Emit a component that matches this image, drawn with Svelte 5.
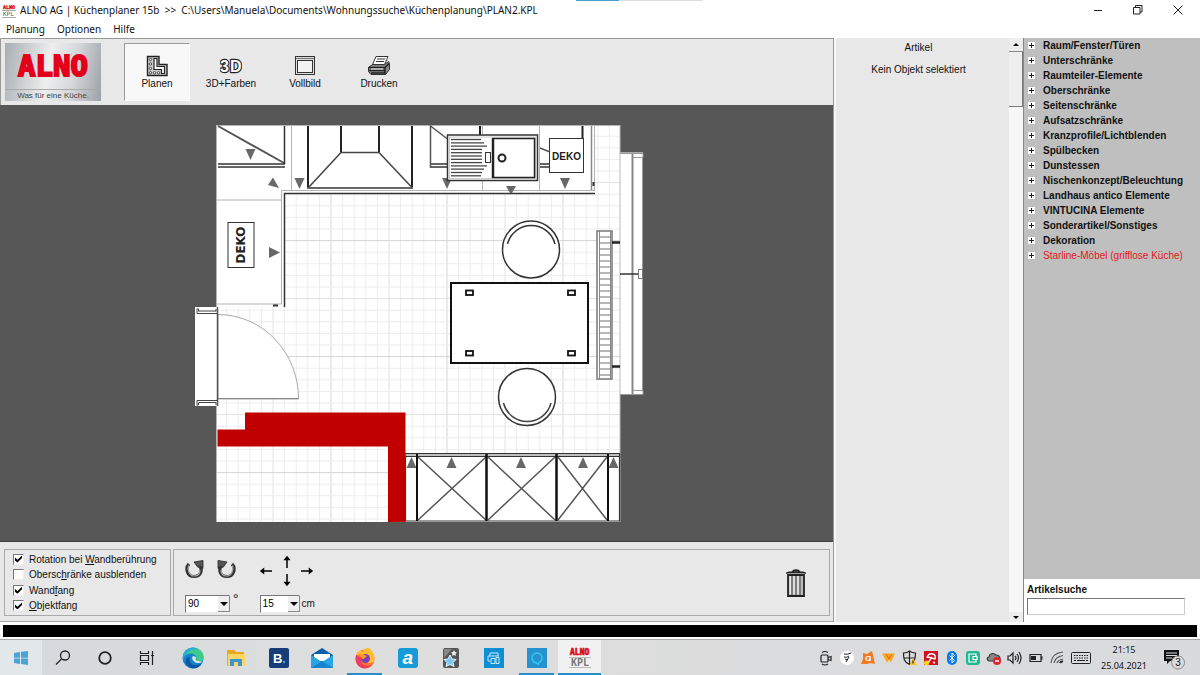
<script>
  const menu = ['Planung', 'Optionen', 'Hilfe'];

  const tools = [
    { id: 'planen', label: 'Planen' },
    { id: 'farben', label: '3D+Farben' },
    { id: 'vollbild', label: 'Vollbild' },
    { id: 'drucken', label: 'Drucken' }
  ];

  const katalog = [
    'Raum/Fenster/Türen',
    'Unterschränke',
    'Raumteiler-Elemente',
    'Oberschränke',
    'Seitenschränke',
    'Aufsatzschränke',
    'Kranzprofile/Lichtblenden',
    'Spülbecken',
    'Dunstessen',
    'Nischenkonzept/Beleuchtung',
    'Landhaus antico Elemente',
    'VINTUCINA Elemente',
    'Sonderartikel/Sonstiges',
    'Dekoration',
    'Starline-Möbel (grifflose Küche)'
  ];

  const apps = ['edge', 'explorer', 'booking', 'mail', 'firefox', 'a', 'photo', 'print', 'alexa', 'alno'];
  const tray = ['meet', 'pen', 'avast', 'w', 'shield', 'avira', 'bluetooth', 'wallet', 'cloud', 'sound', 'battery', 'wifi'];
  const running = ['firefox', 'alexa', 'alno'];

  let activeTool = $state('planen');
  let rotation = $state(true);
  let ausblenden = $state(false);
  let wandfang = $state(true);
  let objektfang = $state(true);
  let winkel = $state('90');
  let schritt = $state('15');
  let suche = $state('');

  // Raster: alle 10 cm eine Linie, jede zehnte kräftig
  const step = 11.6;
  const gridX = Array.from({ length: 35 }, (_, i) => ({ pos: 215 + i * step, i })).slice(1);
  const gridY = Array.from({ length: 35 }, (_, i) => ({ pos: 124.6 + i * step, i })).slice(1);
  const gridColor = (i) => (i % 10 === 0 ? '#d6d6d6' : i % 5 === 0 ? '#e2e2e2' : '#ededed');

  const abtropf = [481, 484, 487, 482, 482, 482, 482, 482, 487, 484, 482, 481];
  const rippen = Array.from({ length: 24 }, (_, i) => 237 + i * 6);
  const schraenke = [[418, 486], [488, 555], [558, 607]];
</script>

{#snippet down(x, y)}
  <path d="M{x - 5} {y - 5}h10l-5 11z" fill="#686868" />
{/snippet}

{#snippet up(x, y)}
  <path d="M{x - 5} {y + 5}h10l-5 -11z" fill="#686868" />
{/snippet}

{#snippet turn()}
  <path d="M4 5C0 9 2 17.500 9 17.500c7 0 8.500-6 6-10.500" fill="none" stroke="#333" stroke-width="3.200" />
  <path d="M3.500 6.500C2 11 4.500 17 9.500 17c4 0 5.500-2.500 5.500-6" fill="none" stroke="#aaa" stroke-width="1.200" />
  <path d="M9 3l9-1.500v8l-3-2.500-2 1.500z" fill="#555" stroke="#222" stroke-width=".8" />
{/snippet}

<div class="window">
  <header class="titlebar">
    <svg class="app-icon" width="14" height="15" viewBox="0 0 14 15">
      <text x="1" y="6" font-size="5" font-weight="bold" fill="#d8101c" stroke="#d8101c" stroke-width=".4">ALNO</text>
      <path d="M0 7.500h14M0 14.500h14" stroke="#aaa" />
      <text x="1" y="13" font-size="6" fill="#555">KPL</text>
    </svg>
    <h1>ALNO AG | Küchenplaner 15b  &gt;&gt;  C:\Users\Manuela\Documents\Wohnungssuche\Küchenplanung\PLAN2.KPL</h1>
    <div class="tab-edge"></div>
    <div class="controls">
      <button aria-label="Minimieren"><svg width="10" height="10" viewBox="0 0 10 10"><path d="M1 5.500h8" stroke="#222" /></svg></button>
      <button aria-label="Verkleinern"><svg width="10" height="10" viewBox="0 0 10 10"><path d="M.5 2.500h6.500v6.500h-6.500zM2.500 2.500v-2h6.500v6.500h-2" fill="none" stroke="#222" /></svg></button>
      <button aria-label="Schließen"><svg width="10" height="10" viewBox="0 0 10 10"><path d="M.5 .5l9 9M9.500 .5l-9 9" stroke="#222" /></svg></button>
    </div>
  </header>

  <nav class="menu">
    {#each menu as item}
      <button>{item}</button>
    {/each}
  </nav>

  <main>
    <section class="planner">
      <div class="toolbar">
        <div class="brand">
          <strong>ALNO</strong>
          <span>Was für eine Küche.</span>
        </div>
        {#each tools as tool}
          <button class="tool" class:active={activeTool === tool.id} onclick={() => (activeTool = tool.id)}>
            <svg width="22" height="22" viewBox="0 0 22 22" fill="none" stroke="#333">
              {#if tool.id === 'planen'}
                <path d="M1.500 1.500h11.500v8h8v11h-19.500z" fill="#ccc" stroke="#222" stroke-width="1.400" />
                <path d="M8 3.500h3v8h7.500v7h-3v-4h-7.500z" fill="#fff" stroke="#222" stroke-width="1.200" />
                {#each [[4.5, 4.5], [4.5, 9], [4.5, 13.5], [4.5, 17.8], [8.5, 17.8], [12.5, 17.8]] as [cx, cy]}
                  <circle {cx} {cy} r="1.200" fill="#fff" stroke-width=".9" />
                {/each}
              {:else if tool.id === 'farben'}
                <g font-size="16" font-weight="bold" fill="#fff" stroke="#222" stroke-width="2.400" paint-order="stroke" stroke-linejoin="round">
                  <text x="0" y="17">3</text>
                  <text x="10" y="17">D</text>
                </g>
              {:else if tool.id === 'vollbild'}
                <rect x="1.500" y="1.500" width="19" height="18" fill="#ddd" />
                <path d="M2 3.500h18" stroke="#777" />
                <rect x="3.500" y="5.500" width="15" height="12" fill="#f2f2f2" />
              {:else}
                <path d="M8 1.500h12l-3.500 8h-12z" fill="#fff" />
                <path d="M9 4h8M8 6.500h8" />
                <path d="M4.500 9.500h12l4-3 1 2v6l-4 5H3l-2.500-3v-4z" fill="#888" />
                <path d="M.5 12.500h16.500l4-4M1 15.500h16M3 18h14M17 13v6" stroke="#222" stroke-width="1.500" />
                <path d="M3 14h12" stroke="#eee" />
              {/if}
            </svg>
            <span>{tool.label}</span>
          </button>
        {/each}
      </div>

      <div class="canvas">
        <svg viewBox="0 105 833 436" role="img" aria-label="Grundriss der Küche" fill="none">
          <path d="M216 125h404v397h-404z" fill="#fff" />
          {#each gridX as line}
            <path d="M{line.pos} 125v397" stroke={gridColor(line.i)} />
          {/each}
          {#each gridY as line}
            <path d="M216 {line.pos}h404" stroke={gridColor(line.i)} />
          {/each}
          <path d="M216.500 522v-396.500h403.500" stroke="#b5b5b5" />

          <!-- Arbeitsplatte -->
          <path d="M217 126h378v68h-310v113h-68z" fill="#fff" />
          <path d="M595 190.500h-313.500v113.500h-64.500M217 200h65M291.500 126v65M482.500 126v65M539.500 126v65M594.500 126v65" stroke="#b2b2b2" />
          <path d="M595 193.500h-310.500v113.500" stroke="#333" stroke-width="1.500" />
          <path d="M591.500 126v64" stroke="#888" stroke-width="1.500" />
          <path d="M593.500 182v4M273 305.500h5" stroke="#333" stroke-width="2" />

          <!-- Oberschränke -->
          <path d="M218 126l66 37" stroke="#555" stroke-width="2" />
          <path d="M284.500 126v38M218 164h67M218 167h67M430.500 164h17M430.500 167h17M540 164h10M540 167h10" stroke="#333" stroke-width="1.500" />
          <path d="M430.500 168v-42l17 13M540 148l10 4" stroke="#555" stroke-width="1.500" />
          <path d="M480 126v10M582.500 126v13" stroke="#222" stroke-width="2" />

          <!-- Dunstabzug -->
          <path d="M308 126v61M412 126v61M341 126v26M379 126v26" stroke="#222" stroke-width="2" />
          <path d="M309 187l32-34.500h38l32.500 34.500" stroke="#444" stroke-width="1.500" />
          <path d="M307 188h106" stroke="#333" stroke-width="1.500" />

          {@render down(250.5, 154)}
          {@render down(299.5, 183)}
          {@render down(447, 183)}
          {@render down(565, 183)}
          <path d="M506 186h10l-4 7h-2z" fill="#686868" />
          <path d="M273 177.500l6 10.500-11-3z" fill="#686868" />
          <path d="M269 247v11l11-5.500z" fill="#686868" />

          <!-- Spüle -->
          <rect x="447.500" y="135" width="90" height="45.500" fill="#fff" stroke="#333" stroke-width="1.500" />
          <rect x="449.500" y="137" width="86" height="41.500" stroke="#999" stroke-width=".5" />
          {#each abtropf as end, i}
            <path d="M451 {139.5 + i * 3.3}H{end}" stroke="#444" stroke-width="1.300" />
          {/each}
          <rect x="485.500" y="152.500" width="5" height="10" fill="#fff" stroke="#333" />
          <rect x="493" y="138.500" width="41.500" height="39" fill="#fff" stroke="#222" stroke-width="1.500" />
          <path d="M493 138v40" stroke="#222" stroke-width="2.500" />
          <circle cx="502" cy="158" r="3.500" stroke="#222" stroke-width="2" />

          <!-- Deko -->
          <rect x="549.500" y="138.500" width="34" height="34" fill="#fff" stroke="#333" />
          <text x="566.500" y="160" text-anchor="middle" class="deko">DEKO</text>
          <rect x="228" y="222.500" width="26" height="45" fill="#fff" stroke="#333" />
          <text transform="translate(245 245) rotate(-90)" text-anchor="middle" class="deko wide">DEKO</text>

          <!-- Tisch und Stühle -->
          <rect x="451" y="283" width="137" height="80" fill="#fff" stroke="#111" stroke-width="2" />
          {#each [[466, 290.5], [568, 290.5], [466, 351], [568, 351]] as [x, y]}
            <rect {x} {y} width="7" height="4.500" stroke="#111" stroke-width="1.800" />
          {/each}
          <circle cx="531" cy="249.500" r="28.500" fill="#fff" stroke="#333" stroke-width="1.500" />
          <path d="M507.500 244a24.500 24.500 0 0 1 47.500 0" stroke="#333" stroke-width="1.500" />
          <circle cx="527" cy="397" r="28.500" fill="#fff" stroke="#333" stroke-width="1.500" />
          <path d="M503.500 403a24.500 24.500 0 0 0 47.500 0" stroke="#444" stroke-width="1.500" />

          <!-- Fenster -->
          <path d="M620 152.500h23v242.500h-23z" fill="#fff" />
          <path d="M620 125v397" stroke="#bbb" />
          <path d="M632.500 153v242" stroke="#888" stroke-width="2" />
          <path d="M620 153.500h23M633 157.500h10v-4M620 394.500h13M633 390.500h10v4h-10M642.500 157v234" stroke="#999" />
          <path d="M620 274h18" stroke="#333" stroke-width="1.500" />
          <rect x="638.500" y="269.500" width="4" height="9" fill="#fff" stroke="#777" />

          <!-- Heizkörper -->
          <rect x="597" y="231" width="15" height="148" fill="#fff" stroke="#777" stroke-width="1.500" />
          <path d="M599.500 231v148M610.500 231v148" stroke="#888" />
          {#each rippen as y}
            <path d="M599 {y}h12" stroke="#888" stroke-width="1.200" />
          {/each}
          <path d="M612 242.500h8M612 366.500h8" stroke="#222" stroke-width="2.500" />

          <!-- Tür -->
          <path d="M218 314.500a80.500 84 0 0 1 80.500 84.500h-80.500z" fill="#fff" stroke="#aaa" />
          <path d="M218 398.500h81" stroke="#888" />
          <path d="M195 307h23v99h-23z" fill="#fff" />
          <path d="M217.500 307v99" stroke="#555" stroke-width="1.500" />
          <path d="M197 309.500v4h21M199 311h17M197 404.500v-4h21M199 402.500h17M196.500 309h2v2.500M216 309v2.500M196.500 405h2v-2.500M216 405v-2.500" stroke="#444" />

          <!-- Schränke unten -->
          <path d="M405 453h215v68.500h-215z" fill="#fff" />
          <path d="M405.500 453.500h214v67.500h-214zM405 456.500h214" stroke="#333" stroke-width="1.200" />
          <path d="M405 455h214" stroke="#aaa" stroke-width="1.500" />
          {@render up(411.5, 463)}
          {@render up(451.5, 463)}
          {@render up(521, 463)}
          {@render up(583, 463)}
          {@render up(613.500, 463)}
          {#each schraenke as [l, r]}
            <path d="M{l} 457L{r} 520M{r} 457L{l} 520" stroke="#555" stroke-width="1.500" />
          {/each}
          <path d="M417 454v67M608 454v67" stroke="#111" stroke-width="2" />
          <path d="M486.500 454v67M556.500 454v67" stroke="#111" stroke-width="2.500" />

          <!-- Wand -->
          <path d="M245 412.500h160.500v109.500h-17.500v-75.500h-170.500v-17h27.500z" fill="#c00000" />
        </svg>
      </div>

      <div class="options">
        <fieldset class="checks">
          <label><input type="checkbox" bind:checked={rotation} /><span>Rotation bei <u>W</u>andberührung</span></label>
          <label><input type="checkbox" bind:checked={ausblenden} /><span>Obersc<u>h</u>ränke ausblenden</span></label>
          <label><input type="checkbox" bind:checked={wandfang} /><span>Wand<u>f</u>ang</span></label>
          <label><input type="checkbox" bind:checked={objektfang} /><span><u>O</u>bjektfang</span></label>
        </fieldset>

        <fieldset class="move">
          <div class="group">
            <div class="rotate">
              <button aria-label="Nach links drehen">
                <svg width="20" height="20" viewBox="0 0 20 20">{@render turn()}</svg>
              </button>
              <button aria-label="Nach rechts drehen">
                <svg width="20" height="20" viewBox="0 0 20 20"><g transform="matrix(-1 0 0 1 20 0)">{@render turn()}</g></svg>
              </button>
            </div>
            <div class="field">
              <div class="combo">
                <select aria-label="Drehwinkel in Grad" bind:value={winkel}>
                  <option>45</option>
                  <option>90</option>
                </select>
                <i></i>
              </div>
              <span class="degree">°</span>
            </div>
          </div>

          <div class="group">
            <div class="arrows">
              {#each [['Nach oben', 90, 'n'], ['Nach links', 0, 'w'], ['Nach rechts', 180, 'e'], ['Nach unten', 270, 's']] as [name, angle, area]}
                <button aria-label={name} style:grid-area={area}>
                  <svg width="14" height="14" viewBox="0 0 14 14"><path transform="rotate({angle} 7 7)" d="M2 7h11M4.500 5L2 7l2.500 2z" fill="#000" stroke="#000" stroke-width="1.500" /></svg>
                </button>
              {/each}
            </div>
            <div class="field">
              <div class="combo narrow">
                <select id="schritt" bind:value={schritt}>
                  <option>5</option>
                  <option>15</option>
                </select>
                <i></i>
              </div>
              <label for="schritt">cm</label>
            </div>
          </div>

          <button class="trash" aria-label="Löschen">
            <svg width="20" height="28" viewBox="0 0 20 28">
              <path d="M7 2.500c0-2 6-2 6 0M0 4.500c1-2 19-2 20 0" fill="#555" stroke="#222" stroke-width="1.500" />
              <path d="M2 6h16v21h-16z" fill="#bbb" stroke="#222" stroke-width="1.800" />
              <path d="M6 7v19M10 7v19M14 7v19" stroke="#555" stroke-width="1.200" />
              <path d="M4.200 7v18M8 7v18M12 7v18" stroke="#fff" />
            </svg>
          </button>
        </fieldset>
      </div>
    </section>

    <section class="article">
      <h2>Artikel</h2>
      <p>Kein Objekt selektiert</p>
    </section>
    <div class="scroll">
      <button aria-label="Nach oben blättern"><i class="tri-up"></i></button>
      <div class="thumb"></div>
      <button class="last" aria-label="Nach unten blättern"><i class="tri-down"></i></button>
    </div>

    <aside>
      <ul>
        {#each katalog as name, i}
          <li class:red={i === katalog.length - 1}>
            <button><svg width="7" height="7" viewBox="0 0 7 7"><path d="M0 0h7v7h-7z" fill="#fff" /><path d="M1 3.500h5M3.500 1v5" stroke="#222" /></svg>{name}</button>
          </li>
        {/each}
      </ul>
      <div class="search">
        <label for="suche">Artikelsuche</label>
        <input id="suche" type="text" bind:value={suche} />
      </div>
    </aside>
  </main>

  <div class="status"></div>

  <footer class="taskbar">
    <button class="start" aria-label="Start">
      <svg width="14" height="14" viewBox="0 0 14 14"><path d="M0 2l6-1v5.700H0zM7 .8L14 0v6.700H7zM0 7.500h6v5.500l-6-1zM7 7.500h7V14l-7-1z" fill="#4ba3d8" /></svg>
    </button>
    <button aria-label="Suche">
      <svg width="16" height="16" viewBox="0 0 16 16"><circle cx="10" cy="5.500" r="4.500" fill="none" stroke="#222" stroke-width="1.300" /><path d="M6.500 9L1 14.500" stroke="#222" stroke-width="1.300" /></svg>
    </button>
    <button aria-label="Cortana">
      <svg width="16" height="16" viewBox="0 0 16 16"><circle cx="8" cy="8" r="5.800" fill="none" stroke="#222" stroke-width="1.800" /></svg>
    </button>
    <button aria-label="Taskansicht">
      <svg width="16" height="16" viewBox="0 0 16 16"><path d="M1.500 1v2.500h8V1M1.500 15v-2.500h8V15M1.500 5.500h8v5h-8zM13.500 1v14M12 5.500h3" fill="none" stroke="#222" stroke-width="1.200" /></svg>
    </button>

    <div class="apps">
      {#each apps as app}
        <button class:running={running.includes(app)} class:current={app === 'alno'} aria-label={app}>
          <svg width="22" height="22" viewBox="0 0 22 22">
            {#if app === 'edge'}
              <circle cx="11" cy="11" r="10.500" fill="#1681cf" />
              <path d="M1 8C3 1 12-1 18 3c4 3 5 9 2 11-3 1-7 1-6-1 2-4-3-8-8-6-3 1-5 3-5 5z" fill="#3fcb8c" />
              <path d="M1 8C3 2 10-1 15 1.500 10 3 5 4 1 12z" fill="#25b1d5" />
              <path d="M8 10c-2 5 2 9 7 8 2 0 4-1 5-2-4 8-14 6-16 0-1-4 1-6 4-6z" fill="#0c58a0" />
              <path d="M11 9c-2 2 0 6 4 7 2 .3 4 0 5-1.500l-5-.5c-2-1-1-3-1-4z" fill="#dbe6ee" />
            {:else if app === 'explorer'}
              <path d="M2 3h7l2 2h8v14H2z" fill="#e9a820" /><path d="M3 7h17v12H3z" fill="#fdd562" />
              <path d="M5 19v-7h12v7h-4v-4H9v4z" fill="#3c95d3" />
            {:else if app === 'booking'}
              <rect x="1" y="1" width="20" height="20" rx="2" fill="#163c79" />
              <text x="5" y="16" font-size="13" font-weight="bold" fill="#fff">B</text><circle cx="16" cy="15" r="1.200" fill="#28a8e0" />
            {:else if app === 'mail'}
              <path d="M0 8l11-7 11 7v13H0z" fill="#0b5ea8" /><path d="M3 7h16v7H3z" fill="#fff" /><path d="M0 8l11 7 11-7v13H0z" fill="#27a5e6" /><path d="M0 21l11-7 11 7z" fill="#1586cd" />
            {:else if app === 'firefox'}
              <circle cx="11" cy="12" r="9.500" fill="#ff7139" />
              <path d="M2 8C4 3 7 3 8 5c3-3 4-5 7-4 4 4 7 8 5 13-2 3-7 3-8-1C8 5 6 8 2 8z" fill="#ffbd2e" />
              <path d="M2 8c-3 12 10 18 17 9-7 5-14 0-11-6z" fill="#ef3c61" />
              <circle cx="11.500" cy="11.500" r="4.500" fill="#7940b5" /><path d="M6 8c2-2 5 0 7 1-2 1-2 3-5 3z" fill="#ff9a27" />
            {:else if app === 'a'}
              <rect x="1" y="1" width="20" height="20" rx="3" fill="#159bd7" />
              <text x="5.500" y="17" font-size="19" font-weight="bold" font-style="italic" fill="#fff">a</text>
            {:else if app === 'photo'}
              <rect x="3" y="1" width="16" height="20" rx="2" fill="#555" /><path d="M4 2h8l-8 9z" fill="#888" />
              <path d="M10 8l2 4 4 .5-3 3 1 4-4-2-4 2 1-4-3-3 4-.5z" fill="#79c6f5" stroke="#e6f4ff" /><path d="M14 3l1 2 2 .5-1.500 1.500.5 2-2-1-2 1 .5-2L11 5.500l2-.5z" fill="#eee" />
            {:else if app === 'print'}
              <rect x="1" y="1" width="20" height="20" fill="#0c8fd5" />
              <path d="M7 9V6h8v3M7 14H5V9h11M8 11.500h4v5H8zM13 10.500h3v6h-3z" fill="none" stroke="#c6e9fa" />
            {:else if app === 'alexa'}
              <rect x="1" y="1" width="20" height="20" fill="#2692cf" />
              <path d="M9 15.500a5 5 0 1 1 4 0l-.5 1.500z" fill="none" stroke="#35c6ef" stroke-width="1.500" />
            {:else}
              <g class="blocky" font-weight="bold">
                <text x="1" y="8" font-size="8" fill="#d8101c" stroke="#d8101c" stroke-width=".7">ALNO</text>
                <text x="2" y="19" font-size="10" fill="#777">KPL</text>
              </g>
              <path d="M0 10.500h22M0 20.500h22" stroke="#bbb" />
            {/if}
          </svg>
        </button>
      {/each}
    </div>

    <div class="tray">
      {#each tray as icon}
        <button aria-label={icon}>
          <svg width="16" height="16" viewBox="0 0 16 16" fill="none" stroke="#222" stroke-width="1.200">
            {#if icon === 'meet'}
              <rect x="3" y="5" width="7" height="7" rx="1" /><path d="M10 7.500l3-1v4l-3-1M4 2.500q3-2 6 0M4 14q3 2 6 0" />
            {:else if icon === 'pen'}
              <circle cx="8" cy="8" r="7" fill="#fff" stroke="none" /><path d="M5 4q3 1 7-1M5 7q3 1 5-1M7 12l3-5M6 9l3 1" stroke-width="1" />
            {:else if icon === 'avast'}
              <path d="M3 3l4 1 5-3 1 4 2 9-5-1-3 1-6 0 2-5z" fill="#f47a20" stroke="none" /><circle cx="8" cy="8.500" r="2" stroke="#fff" /><path d="M10 6v5" stroke="#fff" />
            {:else if icon === 'w'}
              <path d="M1 3.500h13l-4 9-2-3-2 3z" fill="#fba81c" stroke="none" /><path d="M5 4l3 5 3-5" stroke="#ee7417" />
            {:else if icon === 'shield'}
              <path d="M1.500 3Q5 3 7.500 1 10 3 13.500 3c0 6-1 9-6 11.500C2 12 1.500 9 1.500 3zM7.500 1v13M2 8h11" /><path d="M11 8l4 7H7.500z" fill="#fdc52c" stroke="none" /><path d="M11 10.500v3" />
            {:else if icon === 'avira'}
              <path d="M1 1h14v14H1z" fill="#d10f20" stroke="none" /><path d="M4 8q1-5 6-4 3 1 2 5l-7-2M9 7l-4 6M10 12l2 1" stroke="#fff" stroke-width="1.400" /><circle cx="3.500" cy="13" r="2.500" fill="#ffd21c" stroke="none" />
            {:else if icon === 'bluetooth'}
              <rect x="3" y="1" width="10" height="14" rx="5" fill="#087ae5" stroke="none" /><path d="M5.500 5.500l5 5L8 13V3l2.500 2.500-5 5" stroke="#fff" stroke-width="1" />
            {:else if icon === 'wallet'}
              <rect x="1" y="1" width="14" height="14" rx="3" fill="#20b793" stroke="none" /><path d="M11 6V4H4v8h7v-2M8 6.500h4v3H8z" stroke="#fff" />
            {:else if icon === 'cloud'}
              <path d="M3 11c-3-1-2-4 0-4 0-3 4-5 7-2 3 0 4 2 4 4v2z" fill="#888" stroke="#333" /><circle cx="11" cy="11" r="4" fill="#dc2532" stroke="none" /><path d="M9 11h4" stroke="#fff" stroke-width="1.500" />
            {:else if icon === 'sound'}
              <path d="M1 6h2l3-3v10l-3-3H1zM8 6q2 2 0 4M10 4q3 4 0 8M12 2q4 6 0 12" />
            {:else if icon === 'battery'}
              <path d="M2 4.500h11v7H2z" /><path d="M3 6h5v4H3zM13 6.500h1.500v3H13z" fill="#222" stroke="none" />
            {:else}
              <path d="M2 13Q3 3 14 2M5 13q1-6 9-7.500M8 13q1-3 6-4" stroke="#555" /><path d="M11 13q1-2 3-1.500" stroke-width="2" />
            {/if}
          </svg>
        </button>
      {/each}
      <button class="keyboard" aria-label="Bildschirmtastatur">
        <svg width="20" height="14" viewBox="0 0 20 14" fill="none" stroke="#222"><rect x=".5" y="1.500" width="19" height="11" rx="1" /><path d="M3 4.500h14M3 7h14" stroke-dasharray="1.500 1" /><path d="M3 9.500h2M6 9.500h8M15 9.500h2" /></svg>
      </button>
      <div class="clock"><time>21:15</time><time>25.04.2021</time></div>
      <button class="notes" aria-label="Benachrichtigungen">
        <svg width="24" height="24" viewBox="0 0 24 24">
          <path d="M3 4h15v11H9l-3 3v-3H3z" fill="#111" /><path d="M5 7h11M5 9.500h11M5 12h6" stroke="#ddd" />
          <circle cx="17" cy="16.500" r="6.500" fill="#dadbdd" stroke="#888" />
          <text x="17" y="20" text-anchor="middle" font-size="10" fill="#111">3</text>
        </svg>
      </button>
    </div>
  </footer>
</div>

<style>
  :global(body) {
    margin: 0;
  }

  .window {
    display: flex;
    flex-direction: column;
    min-height: 100vh;
    background: #fff;
    color: #111;
    font-family: "Liberation Sans", Arial, sans-serif;
    font-size: 10px;
  }

  button {
    display: flex;
    align-items: center;
    justify-content: center;
    padding: 0;
    border: 0;
    background: none;
    color: inherit;
    font: inherit;
  }

  svg {
    flex: none;
  }

  h1,
  h2,
  p,
  ul {
    margin: 0;
    padding: 0;
    font-size: inherit;
    font-weight: normal;
    list-style: none;
  }

  .titlebar {
    position: relative;
    display: flex;
    align-items: center;
    height: 20px;
    padding: 0 2px;
    gap: 4px;
  }

  .titlebar h1 {
    flex: 1;
    font: 10px "Noto Sans", sans-serif;
    white-space: pre;
  }

  .app-icon,
  .blocky {
    font-family: "DejaVu Sans Mono", monospace;
  }

  .tab-edge {
    position: absolute;
    top: 0;
    left: 48%;
    width: 43px;
    height: 1px;
    background: #4aa0d0;
    box-shadow: 43px 0 #ddd, 84px 0 #ddd;
  }

  .controls {
    display: flex;
  }

  .controls button {
    width: 40px;
    height: 20px;
  }

  .menu {
    display: flex;
    gap: 12px;
    height: 18px;
    padding: 0 6px;
    font: 10px "Noto Sans", sans-serif;
  }

  main {
    flex: 1;
    display: flex;
    background: #e8e8e8;
  }

  .planner {
    flex: 1;
    display: flex;
    flex-direction: column;
    min-width: 0;
    border-right: 1px solid #999;
  }

  .toolbar {
    display: flex;
    align-items: center;
    gap: 8px;
    height: 66px;
    padding-left: 4px;
    border-top: 1px solid #999;
    border-left: 1px solid #999;
  }

  .brand {
    display: flex;
    flex-direction: column;
    align-items: center;
    justify-content: space-between;
    width: 96px;
    height: 58px;
    margin-right: 15px;
    background: linear-gradient(100deg, #a9adb2, #eee 45%, #d5d7da 70%, #9da1a6);
    color: #444;
    font-size: 8px;
  }

  .brand strong {
    color: #e2001a;
    font: bold 29px/46px "DejaVu Sans Mono", monospace;
    -webkit-text-stroke: 2px #e2001a;
  }

  .brand span {
    width: 100%;
    border-top: 1px solid #aaa;
    line-height: 11px;
    text-align: center;
  }

  .tool {
    flex-direction: column;
    gap: 1px;
    width: 66px;
    height: 58px;
    box-sizing: border-box;
    border: 1px solid transparent;
  }

  .tool.active {
    border-color: #999 #fff #fff #999;
    background: #f8f8f8;
  }

  .canvas {
    flex: 1;
    display: flex;
    background: #575757;
    border-bottom: 1px solid #444;
  }

  .canvas svg {
    flex: 1;
    min-width: 0;
  }

  .deko {
    font-size: 10px;
    font-weight: bold;
    fill: #222;
  }

  .deko.wide {
    font: bold 12px "DejaVu Sans", sans-serif;
  }

  .options {
    display: flex;
    gap: 2px;
    padding: 7px 3px 5px 4px;
    border-bottom: 1px solid #aaa;
  }

  fieldset {
    margin: 0;
    min-width: 0;
    height: 67px;
    box-sizing: border-box;
    border: 1px solid #aaa;
  }

  .checks {
    display: flex;
    flex-direction: column;
    justify-content: space-between;
    width: 167px;
    padding: 2px 8px;
  }

  .checks label {
    display: flex;
    align-items: center;
    gap: 5px;
    height: 14px;
  }

  .checks input {
    position: relative;
    width: 11px;
    height: 11px;
    margin: 0;
    appearance: none;
    border: 1px solid;
    border-color: #777 #eee #eee #777;
    background: #fff;
  }

  .checks input:checked::after {
    content: "";
    position: absolute;
    inset: 1px;
    background: #000;
    clip-path: polygon(0 30%, 35% 60%, 100% 0, 100% 35%, 35% 100%, 0 70%);
  }

  .move {
    flex: 1;
    display: flex;
    align-items: center;
    gap: 21px;
    padding: 0 23px 0 11px;
  }

  .group {
    display: flex;
    flex-direction: column;
    justify-content: space-between;
    height: 60px;
  }

  .rotate {
    display: flex;
    gap: 11px;
    padding-top: 6px;
  }

  .field {
    display: flex;
    align-items: center;
    gap: 2px;
  }

  .degree {
    align-self: flex-start;
    margin-left: 1px;
    font-size: 14px;
    line-height: 8px;
  }

  .combo {
    position: relative;
    width: 45px;
    height: 18px;
  }

  .combo.narrow {
    width: 40px;
  }

  .combo select {
    width: 100%;
    height: 100%;
    padding: 0 2px;
    appearance: none;
    border: 1px solid;
    border-color: #777 #eee #eee #777;
    border-radius: 0;
    background: #fff;
    font: inherit;
  }

  .combo i {
    position: absolute;
    top: 1px;
    right: 0;
    width: 12px;
    height: 16px;
    background: #eee;
    border-right: 1px solid #888;
    border-bottom: 1px solid #888;
    box-sizing: border-box;
    pointer-events: none;
  }

  .combo i::after {
    content: "";
    position: absolute;
    top: 6px;
    left: 2px;
    border: 4px solid transparent;
    border-top-color: #000;
    border-bottom: 0;
  }

  .arrows {
    display: grid;
    grid-template-areas: ". n ." "w n e" "w s e" ". s .";
    grid-template-columns: 13px 28px 13px;
    grid-template-rows: repeat(4, 9px);
  }

  .trash {
    margin-left: auto;
  }

  .article {
    width: 165px;
    padding: 3px 8px 2px 0;
    border-left: 2px solid #f6f6f6;
    text-align: center;
  }

  .article h2 {
    line-height: 14px;
  }

  .article p {
    margin-top: 8px;
    line-height: 14px;
  }

  .scroll {
    display: flex;
    flex-direction: column;
    width: 14px;
    background: #f7f7f7;
    border-right: 1px solid #888;
  }

  .scroll button {
    height: 14px;
    background: #eee;
    border-bottom: 1px solid #888;
  }

  .scroll .last {
    height: 10px;
    margin-top: auto;
    border: 0;
  }

  .thumb {
    height: 54px;
    background: #eee;
    border-right: 1px solid #777;
    border-bottom: 1px solid #777;
  }

  .tri-up,
  .tri-down {
    border: 3px solid transparent;
    border-top-width: 0;
    border-bottom-color: #000;
  }

  .tri-down {
    border-width: 3px 3px 0;
    border-color: #000 transparent;
  }

  aside {
    display: flex;
    flex-direction: column;
    width: 176px;
    background: #bfbfbf;
  }

  aside ul {
    flex: 1;
    font-weight: bold;
  }

  aside li button {
    gap: 8px;
    height: 15px;
    padding-left: 4px;
    white-space: nowrap;
  }

  aside .red button {
    color: #e8141c;
    font-weight: normal;
  }

  .search {
    display: flex;
    flex-direction: column;
    gap: 2px;
    padding: 5px 15px 7px 3px;
    background: #fff;
    font-weight: bold;
  }

  .search label {
    line-height: 12px;
  }

  .search input {
    height: 17px;
    box-sizing: border-box;
    padding: 0 2px;
    border: 1px solid;
    border-color: #777 #ccc #ccc #777;
    border-radius: 0;
    font: inherit;
  }

  .status {
    height: 12px;
    margin: 3px 3px 2px;
    background: #000;
  }

  .taskbar {
    display: flex;
    height: 35px;
    border-top: 1px solid #aaa;
    background: linear-gradient(90deg, #d4d9dd, #dedede 30%, #d9dadc);
  }

  .taskbar > button {
    width: 42px;
  }

  .taskbar .start {
    background: #e2e7ea;
  }

  .apps {
    display: flex;
    margin-left: 3px;
  }

  .apps button {
    position: relative;
    width: 43px;
  }

  .apps .current {
    background: #f1f1f1;
  }

  .apps .running::after {
    content: "";
    position: absolute;
    inset: auto 4px 0;
    height: 2px;
    background: #2d8bc6;
  }

  .apps .current::after {
    inset: auto 0 0;
  }

  .tray {
    display: flex;
    align-items: center;
    margin-left: auto;
    padding-right: 8px;
  }

  .tray button {
    width: 21px;
  }

  .tray .keyboard {
    width: 27px;
  }

  .clock {
    display: flex;
    flex-direction: column;
    width: 60px;
    font: 9px/16px "Noto Sans", sans-serif;
    text-align: center;
  }

  .tray .notes {
    width: 38px;
  }
</style>
